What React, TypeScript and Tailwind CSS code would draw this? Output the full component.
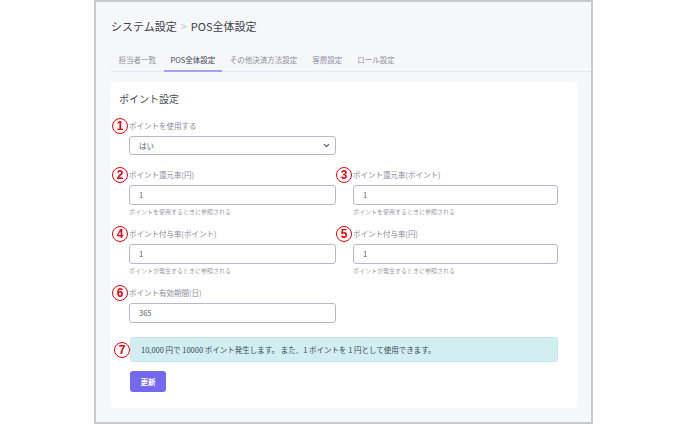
import { ChevronDown } from 'lucide-react';

const jp = { fontFamily: '"Noto Sans CJK JP", "Noto Sans", sans-serif' };

function Mark({ n }: { n: number }) {
  return (
    <span className="absolute left-[-17px] top-1/2 -translate-y-1/2 flex h-[16px] w-[16px] items-center justify-center rounded-full border-[1.5px] border-[#e60012] bg-white text-[12px] font-semibold leading-none text-[#e60012] [font-family:'Liberation_Sans',sans-serif]">
      {n}
    </span>
  );
}

function Field({
  n,
  label,
  value,
  help,
}: {
  n: number;
  label: string;
  value: string;
  help?: string;
}) {
  return (
    <div className="flex flex-col">
      <div className="relative flex h-[12px] items-center text-[7.5px] text-[#8c8c99]">
        <Mark n={n} />
        {label}
      </div>
      <div className="mt-[4px] flex h-[20px] items-center rounded-[3px] border border-[#b9b7cc] bg-white px-[9px] text-[7.5px] text-[#5c5c6a]">
        {value}
      </div>
      {help && (
        <div className="mt-[1px] flex h-[10px] items-center text-[6px] text-[#9a9aa6]">{help}</div>
      )}
    </div>
  );
}

export default function App() {
  const tabs = ['担当者一覧', 'POS全体設定', 'その他決済方法設定', '客層設定', 'ロール設定'];

  return (
    <div className="h-[425px] w-[688px] overflow-hidden bg-white" style={jp}>
      <div className="ml-[94px] flex h-[424px] w-[499px] flex-col border-2 border-[#c9c9c9] bg-[#f6f7fb]">
        {/* breadcrumb title */}
        <div className="ml-[15px] mt-[16px] flex h-[16px] items-center text-[11px] text-[#3e3e4c]">
          システム設定
          <span className="mx-[4px] text-[#c4c4cc]">&gt;</span>
          POS全体設定
        </div>

        {/* tabs */}
        <div className="ml-[15px] mt-[20px] flex h-[18px] border-b border-[#e6e7f1]">
          {tabs.map((t, i) => (
            <div
              key={t}
              className={
                i === 1
                  ? 'relative flex items-start px-[7px] text-[7.5px] text-[#44444f]'
                  : 'relative flex items-start px-[7.5px] text-[7.5px] text-[#8e8e9a]'
              }
            >
              {t}
              {i === 1 && (
                <span className="absolute bottom-[-1px] left-0 right-0 h-[2px] bg-[#a7a1ea]" />
              )}
            </div>
          ))}
        </div>

        {/* card */}
        <div className="ml-[15px] mr-[14px] mt-[10px] flex flex-col rounded-[4px] bg-white pb-[16px] pt-[9px]">
          <div className="ml-[8px] flex h-[14px] items-center text-[10px] text-[#4a4a56]">ポイント設定</div>

          <div className="ml-[18px] mr-[19px] flex flex-col">
            <div className="mt-[15px] w-[207px]">
              <div className="relative flex h-[12px] items-center text-[7.5px] text-[#8c8c99]">
                <Mark n={1} />
                ポイントを使用する
              </div>
              <div className="mt-[4px] flex h-[19px] items-center justify-between rounded-[3px] border border-[#b9b7cc] bg-white pl-[9px] pr-[4px] text-[7.5px] text-[#5c5c6a]">
                はい
                <ChevronDown size={9} strokeWidth={3} className="text-[#55556a]" />
              </div>
            </div>

            <div className="mt-[14px] grid grid-cols-[207px_205px] gap-x-[17px] gap-y-[12px]">
              <Field n={2} label="ポイント還元率(円)" value="1" help="ポイントを使用するときに参照される" />
              <Field n={3} label="ポイント還元率(ポイント)" value="1" help="ポイントを使用するときに参照される" />
              <Field n={4} label="ポイント付与率(ポイント)" value="1" help="ポイントが発生するときに参照される" />
              <Field n={5} label="ポイント付与率(円)" value="1" help="ポイントが発生するときに参照される" />
              <Field n={6} label="ポイント有効期間(日)" value="365" />
            </div>

            <div className="relative mt-[14px] ml-[1px] flex h-[25px] items-center rounded-[3px] border border-[#c3e6ea] bg-[#d3eef1] px-[10px] text-[7.5px] text-[#2f4d52]">
              <Mark n={7} />
              10,000 円で 10000 ポイント発生します。 また、1 ポイントを 1 円として使用できます。
            </div>

            <button className="ml-[1px] mt-[9px] flex h-[21px] w-[36px] items-center justify-center rounded-[3px] bg-[#7468ec] text-[7.5px] font-bold text-white">
              更新
            </button>
          </div>
        </div>
      </div>
    </div>
  );
}
